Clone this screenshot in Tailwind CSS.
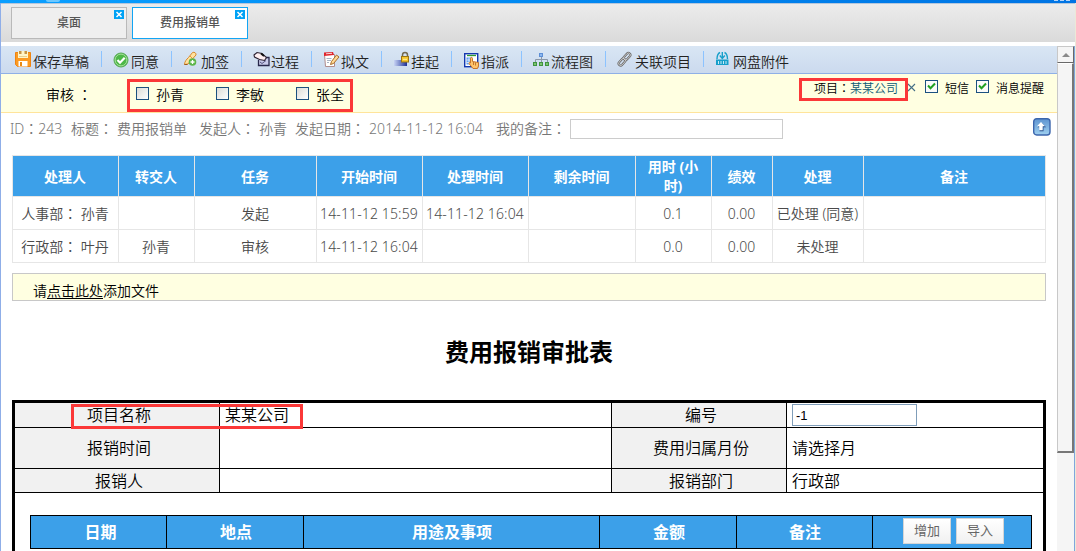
<!DOCTYPE html>
<html lang="zh-CN">
<head>
  <meta charset="UTF-8" />
  <meta name="viewport" content="width=device-width, initial-scale=1.0" />
  <title>费用报销单</title>
  <script src="https://cdn.jsdelivr.net/npm/@tailwindcss/browser@4"></script>
  <style>
    body { font-family: 'Noto Sans', 'Noto Sans CJK SC', sans-serif; }
    /* full-width colon centred in its cell */
    i { font-family: 'Noto Sans CJK TC', sans-serif; font-style: normal; line-height: 0; }
  </style>
</head>
<body class="w-[1076px] h-[551px] overflow-hidden bg-white text-black text-[14px] leading-[18px] font-[350] whitespace-nowrap relative flex flex-col">

  <!-- Window top edge -->
  <div class="relative h-[3px] shrink-0 bg-linear-to-r from-[#0a9fff] to-[#0074e4] overflow-hidden">
    <div class="absolute left-[46px] top-0 w-[14px] h-[2px] rounded-b-full bg-[#6cc8ff]"></div>
    <div class="absolute right-[6px] top-0 flex gap-[2px]">
      <b class="w-1 h-px bg-[#b7d6fa]"></b><b class="w-1 h-px bg-[#b7d6fa]"></b><b class="w-1 h-px bg-[#b7d6fa]"></b>
    </div>
  </div>

  <div class="flex flex-1 min-h-0">
    <div class="w-[1075px] flex flex-col border-l border-[#8faee8]">

      <!-- Tabs -->
      <div class="h-[39px] shrink-0 flex gap-[5px] pl-[10px] pt-1 border-t border-[#b5c7dc] bg-linear-to-b from-[#ececec] to-[#dadada] text-[12px] font-medium text-[#555]">
        <div class="relative -mt-px w-[116px] h-8 border border-[#b9b9b9] bg-[#efefef] flex items-center justify-center">桌面
          <svg class="absolute right-[2px] top-[2px]" width="10" height="9" viewBox="0 0 10 9"><rect width="10" height="9" fill="#00a2f5"/><path d="M2.500 2l5 5M7.500 2l-5 5" stroke="#fff" stroke-width="1.500"/></svg>
        </div>
        <div class="relative -mt-px w-[116px] h-8 border border-[#12a5f4] bg-white flex items-center justify-center">费用报销单
          <svg class="absolute right-[2px] top-[2px]" width="10" height="9" viewBox="0 0 10 9"><rect width="10" height="9" fill="#00a2f5"/><path d="M2.500 2l5 5M7.500 2l-5 5" stroke="#fff" stroke-width="1.500"/></svg>
        </div>
      </div>

      <div class="flex flex-1 min-h-0 pt-1">
        <div class="w-[1056px] flex flex-col">

          <!-- Toolbar -->
          <div class="h-7 shrink-0 flex pl-[3px] border-b border-[#8fb0e6] bg-linear-to-b from-[#d9e6f4] to-[#cbdaee] text-[#222]">
            <div class="w-[98px] flex pl-[11px]">
              <svg class="mt-[5px] mr-px shrink-0" width="17" height="17" viewBox="0 0 17 17"><path d="M.5 1.500h15v14h-13l-2-2z" fill="#fb9a22" stroke="#ef8410"/><rect x="3" y="0" width="10" height="7" fill="#fff5c8"/><path d="M4 0h2.500v3h-2.500zM9.500 0h2.500v3h-2.500z" fill="#c89445"/><path d="M4 5.500h8" stroke="#e8cf90"/><rect x="3.500" y="10" width="9" height="5.500" fill="#fff"/><rect x="5" y="11" width="2" height="4" fill="#e98a16"/></svg>
              <span class="mt-[7px]">保存草稿</span>
            </div>
            <div class="w-px h-4 mt-[5px] -ml-px bg-[#8cc3ff]"></div>
            <div class="w-[70px] flex pl-[11px]">
              <svg class="mt-[6px] mr-[2px] shrink-0" width="16" height="16" viewBox="0 0 16 16"><circle cx="8" cy="8" r="7" fill="#4db848" stroke="#55a855"/><circle cx="8" cy="8" r="5.900" fill="none" stroke="#a7e09b"/><path d="M4.500 8l2.500 2.700 4.700-5" fill="none" stroke="#fff" stroke-width="2.200"/></svg>
              <span class="mt-[7px]">同意</span>
            </div>
            <div class="w-px h-4 mt-[5px] -ml-px bg-[#8cc3ff]"></div>
            <div class="w-[70px] flex pl-[11px]">
              <svg class="mt-[5px] mr-[2px] shrink-0" width="16" height="16" viewBox="0 0 16 16"><path d="M1.500 13.500c0-3 2-5 4-7l4-5c2-1 4 1 3.500 2.500l-5 5.500-3 3.500z" fill="#ffe2a0" stroke="#d98a2c"/><path d="M7 5l3 3" stroke="#e79a3b"/><path d="M1.500 13.500h3" stroke="#9a5a20"/><circle cx="9.500" cy="11" r="3.800" fill="#5cb54b"/><path d="M9.500 9v4M7.500 11h4" stroke="#fff" stroke-width="1.300"/></svg>
              <span class="mt-[7px]">加签</span>
            </div>
            <div class="w-px h-4 mt-[5px] -ml-px bg-[#8cc3ff]"></div>
            <div class="w-[70px] flex pl-[11px]">
              <svg class="mt-[5px] shrink-0" width="18" height="17" viewBox="0 0 18 17"><path d="M5.500 9v5.500h10.500v-8h-3" fill="#c9cbea" stroke="#28284c" stroke-width="1.300"/><path d="M1 4l3-2.500 5 1 4.500 4-2 3-5-1-5-2.500z" fill="#fff0f2" stroke="#2a2030" stroke-width="1.100"/><path d="M8 2.500l3 2.500" stroke="#111" stroke-width="1.800"/><path d="M7 11l2 1.500 4-3" stroke="#555580" fill="none"/></svg>
              <span class="mt-[7px]">过程</span>
            </div>
            <div class="w-px h-4 mt-[5px] -ml-px bg-[#8cc3ff]"></div>
            <div class="w-[70px] flex pl-[11px]">
              <svg class="mt-[5px] mr-px shrink-0" width="17" height="17" viewBox="0 0 17 17"><path d="M1.500 3.500h10v12h-9z" fill="#fff" stroke="#b08c8c"/><path d="M1 1.500l9-.5 1 3-10 1z" fill="#e0232a"/><path d="M3 2.800l6-.5" stroke="#fff" stroke-width=".8"/><path d="M3.500 7.500h5M4 9.500h4M4 11.500h2" stroke="#a9b4c4"/><path d="M7.500 13.500l1-3 5-6.500 2.500 2-5.500 6.500z" fill="#ffd994" stroke="#a86b28"/></svg>
              <span class="mt-[7px]">拟文</span>
            </div>
            <div class="w-px h-4 mt-[5px] -ml-px bg-[#8cc3ff]"></div>
            <div class="w-[70px] flex pl-[11px]">
              <svg class="mt-[5px] mr-px shrink-0" width="17" height="17" viewBox="0 0 17 17"><defs><linearGradient id="bar"><stop offset="0" stop-color="#c8d4f4"/><stop offset="1" stop-color="#1c2f96"/></linearGradient></defs><rect x="1" y="9" width="13" height="6" fill="url(#bar)"/><path d="M9.500 7v-3a2.500 2.500 0 0 1 5 0v3" fill="none" stroke="#746a50" stroke-width="1.500"/><rect x="8.500" y="5.500" width="7" height="5.500" fill="#f6c52d" stroke="#9c7612"/><path d="M10 8.300h4" stroke="#fff1a0"/></svg>
              <span class="mt-[7px]">挂起</span>
            </div>
            <div class="w-px h-4 mt-[5px] -ml-px bg-[#8cc3ff]"></div>
            <div class="w-[70px] flex pl-[11px]">
              <svg class="mt-[6px] mr-px shrink-0" width="17" height="17" viewBox="0 0 17 17"><rect x="1.700" y="1.700" width="13" height="13" fill="#fff" stroke="#1338b0" stroke-width="1.400"/><path d="M4 3.500h9" stroke="#2b9a35" stroke-width="1.300"/><rect x="3.500" y="5.500" width="5" height="7" fill="#5d9ef0"/><path d="M3.500 8h5M3.500 10.500h5M6 5.500v7" stroke="#fff" stroke-width=".7"/><path d="M7.500 6.500c0-1.500 2-1.500 2 0v3l6 1v3.500l-1 2.500h-4.500l-4-5c0-1.500 1-1 1.500-.5z" fill="#ffc46b" stroke="#c5752b"/><path d="M10.500 10v3M12.500 10.500v3" stroke="#b5651b" stroke-width=".8"/></svg>
              <span class="mt-[7px]">指派</span>
            </div>
            <div class="w-px h-4 mt-[5px] -ml-px bg-[#8cc3ff]"></div>
            <div class="w-[84px] flex pl-[11px]">
              <svg class="mt-[6px] mr-px shrink-0" width="17" height="16" viewBox="0 0 17 16"><rect x="6.500" y="1.500" width="3" height="3" fill="#8cb7ee" stroke="#5d8fd6"/><path d="M8.500 5v5M2.500 10v-2.500h12v2.500" fill="none" stroke="#8b98a8"/><g fill="#7cc36e" stroke="#3f9440"><rect x=".5" y="10.500" width="3" height="3"/><rect x="6.500" y="10.500" width="3" height="3"/><rect x="12.500" y="10.500" width="3" height="3"/></g></svg>
              <span class="mt-[7px]">流程图</span>
            </div>
            <div class="w-px h-4 mt-[5px] -ml-px bg-[#8cc3ff]"></div>
            <div class="w-[98px] flex pl-[11px]">
              <svg class="mt-[5px] mr-[2px] shrink-0" width="16" height="17" viewBox="0 0 16 17"><g fill="none"><g stroke="#666" stroke-width="2.200"><rect x="6" y="3.500" width="8" height="4" rx="2" transform="rotate(-48 10 5.500)"/><rect x="1" y="9" width="8" height="4" rx="2" transform="rotate(-48 5 11)"/></g><g stroke="#ddd" stroke-width=".8"><rect x="6" y="3.500" width="8" height="4" rx="2" transform="rotate(-48 10 5.500)"/><rect x="1" y="9" width="8" height="4" rx="2" transform="rotate(-48 5 11)"/></g></g></svg>
              <span class="mt-[7px]">关联项目</span>
            </div>
            <div class="w-px h-4 mt-[5px] -ml-px bg-[#8cc3ff]"></div>
            <div class="flex pl-[11px]">
              <svg class="mt-[5px] mr-[2px] shrink-0" width="16" height="17" viewBox="0 0 16 17"><g fill="none" stroke="#169fca" stroke-width="1.400"><path d="M5 1.500c-2 1-3 3.500-3 6.500M9.500 1.500c2 1 3 3.500 3 6.500M7.300 1v6"/><path d="M4.800 4.500l2.500 3 2.500-3"/></g><path d="M1 8.500h12.500v5.500h-12.500z" fill="#169fca"/><path d="M3.500 10v3M6 10v3M8.500 10v3M11 10v3" stroke="#c9ecf7"/></svg>
              <span class="mt-[7px]">网盘附件</span>
            </div>
          </div>

          <!-- Reviewers -->
          <div class="relative h-[39px] shrink-0 flex border-b border-[#ffe49b] bg-[#ffffe1]">
            <div class="flex pl-[45px] pt-[12px]">
              <span class="w-[90px]">审核 <i lang="zh-TW">：</i></span>
              <label class="flex w-20 gap-[7px]"><b class="mt-px size-[13px] border border-[#1c5180] bg-linear-to-br from-[#dcdcd7] to-white"></b>孙青</label>
              <label class="flex w-20 gap-[7px]"><b class="mt-px size-[13px] border border-[#1c5180] bg-linear-to-br from-[#dcdcd7] to-white"></b>李敏</label>
              <label class="flex w-20 gap-[7px]"><b class="mt-px size-[13px] border border-[#1c5180] bg-linear-to-br from-[#dcdcd7] to-white"></b>张全</label>
            </div>
            <div class="ml-auto mr-[13px] flex pt-[6px] text-[12px]">
              <span>项目<i lang="zh-TW">：</i></span><span class="text-[#0b5a73] w-[57px]">某某公司</span>
              <svg class="mt-[3px] mr-[9px]" width="9" height="9" viewBox="0 0 9 9"><path d="M1 1l7 7M8 1l-7 7" stroke="#456f86" stroke-width="1.100"/></svg>
              <svg class="mr-[7px]" width="13" height="13" viewBox="0 0 13 13"><rect x=".5" y=".5" width="12" height="12" fill="#fbfbf9" stroke="#1c5180"/><path d="M3 5.500l2.500 2.700 4.500-4.700" fill="none" stroke="#21a121" stroke-width="2"/></svg>
              <span class="w-[31px]">短信</span>
              <svg class="mr-[7px]" width="13" height="13" viewBox="0 0 13 13"><rect x=".5" y=".5" width="12" height="12" fill="#fbfbf9" stroke="#1c5180"/><path d="M3 5.500l2.500 2.700 4.500-4.700" fill="none" stroke="#21a121" stroke-width="2"/></svg>
              <span>消息提醒</span>
            </div>
            <div class="absolute left-[126px] top-[5px] w-[226px] h-[33px] border-3 border-[#fb3838]"></div>
            <div class="absolute left-[798px] top-[4px] w-[109px] h-[23px] border-3 border-[#fb3838]"></div>
          </div>

          <!-- Document info -->
          <div class="h-[42px] shrink-0 flex pl-[9px] pt-[7px] text-[#777]">
            <span class="w-[61px]">ID<i lang="zh-TW">：</i>243</span>
            <span class="w-[46px]">标题<i lang="zh-TW">：</i></span>
            <span class="w-[82px]">费用报销单</span>
            <span class="w-[60px]">发起人<i lang="zh-TW">：</i></span>
            <span class="w-9">孙青</span>
            <span class="w-[74px]">发起日期<i lang="zh-TW">：</i></span>
            <span class="w-[127px] tracking-[0.13px]">2014-11-12 16:04</span>
            <span class="w-[74px]">我的备注<i lang="zh-TW">：</i></span>
            <input class="-mt-px w-[213px] h-5 border border-[#ccc] bg-white" />
            <svg class="ml-auto mr-[6px] -mt-[2px]" width="18" height="18" viewBox="0 0 18 18"><defs><linearGradient id="up" x2="0" y2="1"><stop offset="0" stop-color="#5e94d0"/><stop offset="1" stop-color="#9fd0f0"/></linearGradient></defs><rect x=".7" y=".7" width="16.300" height="16.300" rx="3" fill="url(#up)" stroke="#3c66ad" stroke-width="1.400"/><path d="M8 5l4 4.200h-2.500v4h-4v-4h-2z" transform="translate(1 0)" fill="#27508f"/><path d="M8 4l4 4.200h-2.300v4h-3.500v-4h-2.200z" fill="#fff"/></svg>
          </div>

          <!-- Process log -->
          <table class="ml-[11px] w-[1034px] table-fixed border-collapse text-center text-[#4a4a4a] [&_td]:border [&_td]:border-[#e6e6e6] [&_th]:border [&_th]:border-[#e6e6e6] [&_td]:p-0 [&_td]:pt-px [&_td]:pr-px [&_th]:p-0 [&_th]:pr-px">
            <colgroup>
              <col class="w-[106px]"><col class="w-[76px]"><col class="w-[122px]"><col class="w-[106px]"><col class="w-[106px]"><col class="w-[107px]"><col class="w-[76px]"><col class="w-[61px]"><col class="w-[91px]"><col class="w-[182px]">
            </colgroup>
            <tr class="h-[41px] bg-[#3ca0e9] text-white leading-[19px]">
              <th>处理人</th><th>转交人</th><th>任务</th><th>开始时间</th><th>处理时间</th><th>剩余时间</th><th>用时 (小<br>时)</th><th>绩效</th><th>处理</th><th>备注</th>
            </tr>
            <tr class="h-[33px]">
              <td>人事部<i lang="zh-TW">：</i> 孙青</td><td></td><td>发起</td><td class="tracking-[0.13px]">14-11-12 15:59</td><td class="tracking-[0.13px]">14-11-12 16:04</td><td></td><td>0.1</td><td>0.00</td><td>已处理 (同意)</td><td></td>
            </tr>
            <tr class="h-[33px]">
              <td>行政部<i lang="zh-TW">：</i> 叶丹</td><td>孙青</td><td>审核</td><td class="tracking-[0.13px]">14-11-12 16:04</td><td></td><td></td><td>0.0</td><td>0.00</td><td>未处理</td><td></td>
            </tr>
          </table>

          <!-- Attachments -->
          <div class="mt-[10px] ml-[11px] w-[1034px] h-7 shrink-0 border border-[#c8c8c8] bg-[#ffffe1] pl-5 pt-2">请<span class="underline underline-offset-2">点击此处</span>添加文件</div>

          <h1 class="h-[99px] shrink-0 ml-[11px] w-[1034px] pt-[33px] text-center text-[24px] leading-9 font-bold">费用报销审批表</h1>

          <!-- Expense form -->
          <div class="relative ml-[11px] w-[1034px] h-[170px] shrink-0 border-3 border-black text-[16px] leading-5">
            <div class="grid grid-cols-[205px_392px_175px_256px] grid-rows-[25px_41px_24px] [&>div]:border-b [&>div]:border-black [&>div]:flex [&>div]:items-center">
              <div class="justify-center border-r bg-[#f1f1f1]"><span class="pl-1">项目名称</span></div>
              <div class="border-r pl-[5px]">某某公司</div>
              <div class="justify-center border-r bg-[#f1f1f1]"><span class="pl-1">编号</span></div>
              <div class="pl-[5px]"><input value="-1" class="w-[125px] h-[22px] border border-[#7f9db9] px-[3px] text-[13px] font-normal font-['Liberation_Sans']" /></div>
              <div class="justify-center border-r bg-[#f1f1f1]"><span class="pl-1">报销时间</span></div>
              <div class="border-r"></div>
              <div class="justify-center border-r bg-[#f1f1f1]"><span class="pl-1">费用归属月份</span></div>
              <div class="pl-[5px]">请选择月</div>
              <div class="justify-center border-r bg-[#f1f1f1]"><span class="pl-1">报销人</span></div>
              <div class="border-r"></div>
              <div class="justify-center border-r bg-[#f1f1f1]"><span class="pl-1">报销部门</span></div>
              <div class="pl-[5px]">行政部</div>
            </div>
            <div class="absolute left-[56px] top-px w-[232px] h-[25px] border-3 border-[#fb3838]"></div>

            <!-- Detail rows header -->
            <div class="mt-[22px] ml-[15px] w-[1002px] h-[34px] flex border border-black bg-[#3ca0e9] text-white font-bold [&>div]:flex [&>div]:items-center [&>div]:justify-center [&>div]:border-black">
              <div class="w-[136px] border-r pl-1">日期</div>
              <div class="w-[137px] border-r pl-0.5">地点</div>
              <div class="w-[296px] border-r pl-px">用途及事项</div>
              <div class="w-[137px] border-r pl-0.5">金额</div>
              <div class="w-[136px] border-r pl-px">备注</div>
              <div class="flex-1 gap-[5px] pb-0.5 pl-[3px] font-normal text-[13px] text-[#666]">
                <button class="w-12 h-[26px] border border-[#d5d5d5] bg-linear-to-b from-white to-[#f1f1f1] pb-0.5">增加</button>
                <button class="w-12 h-[26px] border border-[#d5d5d5] bg-linear-to-b from-white to-[#f1f1f1] pb-0.5">导入</button>
              </div>
            </div>
          </div>
        </div>

        <!-- Scrollbar -->
        <div class="w-[18px] flex flex-col bg-[#f5f5f5] border-r border-[#7fa6dc]">
          <div class="h-[17px] border-l border-t border-b border-r border-l-[#c8c8c8] border-t-[#c8c8c8] border-b-[#696969] border-r-[#696969] bg-[#f5f5f5] flex items-center justify-center">
            <svg width="8" height="4" viewBox="0 0 8 4"><path d="M0 4l4-4 4 4z" fill="#8a8a8a"/></svg>
          </div>
          <div class="h-[390px] border-l border-t border-b-2 border-r-2 border-l-[#c8c8c8] border-t-white border-b-[#777] border-r-[#777] bg-[#f5f5f5]"></div>
        </div>
      </div>
    </div>
    <div class="w-px bg-[#ece9d8]"></div>
  </div>
</body>
</html>
